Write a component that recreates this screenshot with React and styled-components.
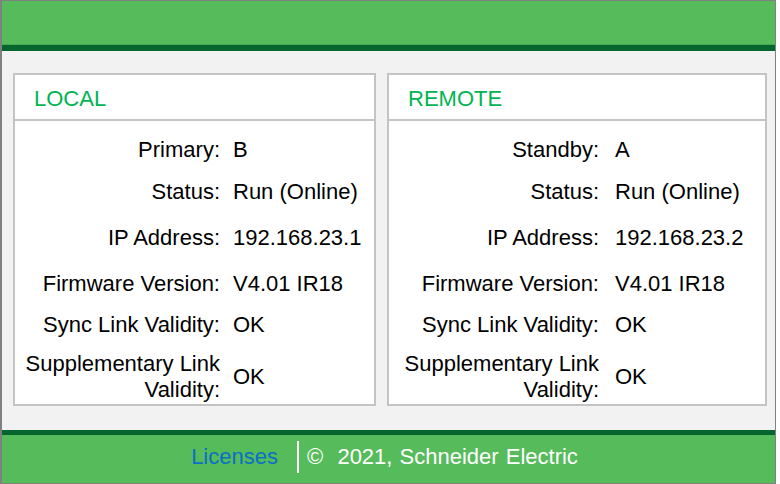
import React from "react";
import styled, { createGlobalStyle } from "styled-components";

const GlobalStyle = createGlobalStyle`
  html, body {
    margin: 0;
    padding: 0;
    background: #ffffff;
  }
  body {
    font-family: "Liberation Sans", Arial, sans-serif;
  }
`;

const Frame = styled.div`
  width: 776px;
  height: 484px;
  box-sizing: border-box;
  border: 1px solid #808080;
  border-left-width: 2px;
  display: flex;
  flex-direction: column;
  background: #f2f2f2;
`;

const Header = styled.header`
  height: 43px;
  background: #56bb5b;
  border-bottom: 1px solid #48a94e;
`;

const DarkBar = styled.div`
  height: ${(p) => p.$h}px;
  background: #04652f;
`;

const Main = styled.main`
  flex: 1;
  display: flex;
  gap: 11px;
  padding: 22px 8px 0 11px;
`;

const Panel = styled.section`
  width: ${(p) => p.$w}px;
  height: 333px;
  box-sizing: border-box;
  border: 2px solid #c4c4c4;
  background: #ffffff;
  display: flex;
  flex-direction: column;
`;

const PanelTitle = styled.h2`
  margin: 0;
  height: 46px;
  box-sizing: border-box;
  border-bottom: 2px solid #c4c4c4;
  display: flex;
  align-items: center;
  padding: 4px 0 0 19px;
  font-size: 22px;
  font-weight: 400;
  color: #00b451;
`;

const Rows = styled.div`
  padding-top: 8px;
  display: grid;
  grid-template-columns: ${(p) => p.$labelW}px 1fr;
  column-gap: ${(p) => p.$gap}px;
`;

const Label = styled.div`
  height: ${(p) => p.$h}px;
  margin-top: ${(p) => p.$mt || 0}px;
  display: flex;
  align-items: center;
  justify-content: flex-end;
  text-align: right;
  font-size: 22px;
  line-height: 26px;
  color: #000;
`;

const Value = styled.div`
  height: ${(p) => p.$h}px;
  margin-top: ${(p) => p.$mt || 0}px;
  display: flex;
  align-items: center;
  font-size: 22px;
  line-height: 26px;
  color: #000;
  white-space: nowrap;
`;

const Footer = styled.footer`
  flex: 0 0 48px;
  background: #56bb5b;
  display: flex;
  align-items: center;
  justify-content: center;
  font-size: 22px;
  padding: 0 8px 4px 0;
  box-sizing: border-box;
`;

const FooterLink = styled.a`
  color: #0b6fc6;
  text-decoration: none;
  padding-right: 19px;
  border-right: 2px solid #ffffff;
  line-height: 32px;
`;

const Copyright = styled.span`
  color: #ffffff;
  padding-left: 8px;
  word-spacing: 1px;
`;

const heights = [42, 42, 50, 42, 40, 52];

function StatusPanel({ title, width, labelW, gap, rows }) {
  return (
    <Panel $w={width}>
      <PanelTitle>{title}</PanelTitle>
      <Rows $labelW={labelW} $gap={gap}>
        {rows.map(([label, value], i) => (
          <React.Fragment key={label}>
            <Label $h={heights[i]} $mt={i === 5 ? 6 : 0}>
              {label}
            </Label>
            <Value $h={heights[i]} $mt={i === 5 ? 6 : 0}>
              {value}
            </Value>
          </React.Fragment>
        ))}
      </Rows>
    </Panel>
  );
}

export default function App() {
  return (
    <>
      <GlobalStyle />
      <Frame>
        <Header />
        <DarkBar $h={6} />
        <Main>
          <StatusPanel
            title="LOCAL"
            width={363}
            labelW={205}
            gap={13}
            rows={[
              ["Primary:", "B"],
              ["Status:", "Run (Online)"],
              ["IP Address:", "192.168.23.1"],
              ["Firmware Version:", "V4.01 IR18"],
              ["Sync Link Validity:", "OK"],
              ["Supplementary Link Validity:", "OK"],
            ]}
          />
          <StatusPanel
            title="REMOTE"
            width={380}
            labelW={210}
            gap={16}
            rows={[
              ["Standby:", "A"],
              ["Status:", "Run (Online)"],
              ["IP Address:", "192.168.23.2"],
              ["Firmware Version:", "V4.01 IR18"],
              ["Sync Link Validity:", "OK"],
              ["Supplementary Link Validity:", "OK"],
            ]}
          />
        </Main>
        <DarkBar $h={5} />
        <Footer>
          <FooterLink href="#">Licenses</FooterLink>
          <Copyright>©&nbsp; 2021, Schneider Electric</Copyright>
        </Footer>
      </Frame>
    </>
  );
}
